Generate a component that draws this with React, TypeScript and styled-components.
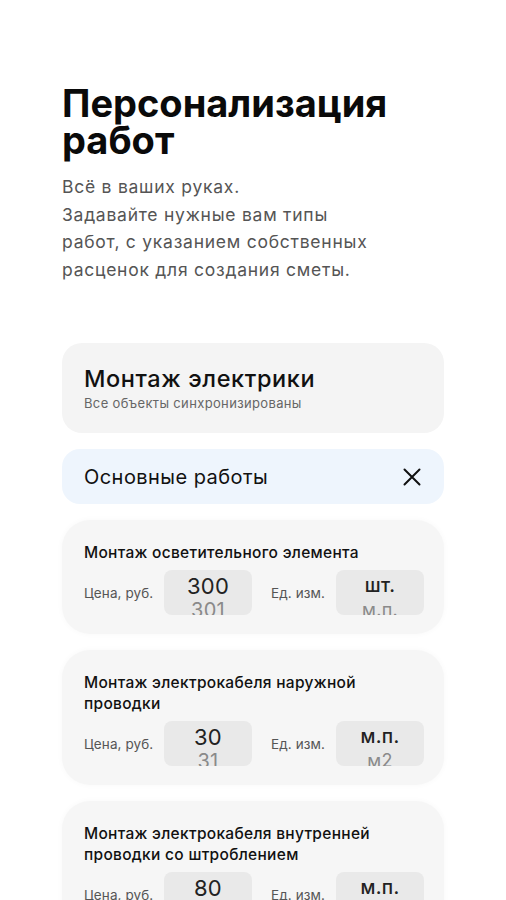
import React from "react";
import styled, { createGlobalStyle } from "styled-components";

const Global = createGlobalStyle`
  html, body { margin: 0; padding: 0; background: #ffffff; }
  body { font-family: Inter, "Noto Sans", "Liberation Sans", sans-serif; color: #111; }
  * { box-sizing: border-box; }
`;

const Page = styled.div`
  width: 506px;
  height: 900px;
  overflow: hidden;
  padding: 85px 62px 0;
  display: flex;
  flex-direction: column;
`;

const Title = styled.h1`
  margin: 0;
  font-size: 38px;
  line-height: 37px;
  font-weight: 700;
  letter-spacing: 0;
  color: #0a0a0a;
`;

const Lead = styled.p`
  margin: 14px 0 0;
  font-size: 17.5px;
  line-height: 27.5px;
  font-weight: 400;
  letter-spacing: 0.75px;
  color: #555;
`;

const List = styled.div`
  margin-top: 60px;
  display: flex;
  flex-direction: column;
  gap: 16px;
`;

const ProjectCard = styled.div`
  height: 90px;
  border-radius: 20px;
  background: #f4f4f4;
  padding: 0 22px;
  display: flex;
  flex-direction: column;
  justify-content: center;
  gap: 3px;
`;

const ProjectName = styled.div`
  font-size: 23.5px;
  line-height: 27px;
  font-weight: 500;
  letter-spacing: 0.6px;
  color: #111;
`;

const ProjectNote = styled.div`
  font-size: 13px;
  line-height: 16px;
  letter-spacing: 0.35px;
  color: #666;
`;

const CategoryBar = styled.div`
  height: 55px;
  border-radius: 18px;
  background: #eef5fd;
  padding: 0 23px 0 22px;
  display: flex;
  align-items: center;
  justify-content: space-between;
`;

const CategoryName = styled.span`
  font-size: 20px;
  font-weight: 400;
  letter-spacing: 0.45px;
  color: #111;
`;

const CloseButton = styled.button`
  border: 0;
  background: none;
  padding: 0;
  display: flex;
  cursor: pointer;
`;

const ItemCard = styled.div`
  border-radius: 28px;
  background: #f6f6f6;
  box-shadow: 0 0 6px rgba(0, 0, 0, 0.03);
  padding: 22px 20px 19px 22px;
  display: flex;
  flex-direction: column;
  gap: 7px;
`;

const ItemName = styled.div`
  font-size: 15.5px;
  line-height: 21px;
  font-weight: 500;
  color: #111;
  letter-spacing: 0.3px;
`;

const Row = styled.div`
  display: grid;
  grid-template-columns: 80px 88px 1fr 88px;
  align-items: center;
`;

const FieldLabel = styled.span<{ $indent?: boolean }>`
  font-size: 13.5px;
  color: #555;
  padding-left: ${(p) => (p.$indent ? "19px" : "0")};
  letter-spacing: 0.1px;
`;

const Wheel = styled.div`
  height: 45px;
  border-radius: 8px;
  background: #e9e9e9;
  overflow: hidden;
  display: flex;
  justify-content: center;
`;

const WheelColumn = styled.div`
  margin-top: -20px;
  display: flex;
  flex-direction: column;
  align-items: center;
`;

const WheelItem = styled.div<{ $active?: boolean; $unit?: boolean }>`
  height: 24px;
  line-height: 24px;
  font-size: ${(p) => (p.$active ? (p.$unit ? "19px" : "22px") : p.$unit ? "18px" : "20px")};
  font-weight: ${(p) => (p.$active && p.$unit ? 500 : 400)};
  color: ${(p) => (p.$active ? "#222" : "#8a8a8a")};
  letter-spacing: 0.3px;
`;

type Item = {
  name: string;
  price: number;
  units: [string, string, string];
};

const items: Item[] = [
  { name: "Монтаж осветительного элемента", price: 300, units: ["компл.", "шт.", "м.п."] },
  { name: "Монтаж электрокабеля наружной проводки", price: 30, units: ["шт.", "м.п.", "м2"] },
  { name: "Монтаж электрокабеля внутренней проводки со штроблением", price: 80, units: ["шт.", "м.п.", "м2"] },
];

function Picker({ values, unit }: { values: [string, string, string]; unit?: boolean }) {
  return (
    <Wheel>
      <WheelColumn>
        <WheelItem $unit={unit}>{values[0]}</WheelItem>
        <WheelItem $active $unit={unit}>{values[1]}</WheelItem>
        <WheelItem $unit={unit}>{values[2]}</WheelItem>
      </WheelColumn>
    </Wheel>
  );
}

const CloseIcon = () => (
  <svg width="18" height="18" viewBox="0 0 18 18" fill="none">
    <path d="M1.5 1.5L16.5 16.5M16.5 1.5L1.5 16.5" stroke="#111" strokeWidth="2" strokeLinecap="round" />
  </svg>
);

export default function App() {
  return (
    <>
      <Global />
      <Page>
        <Title>
          Персонализация
          <br />
          работ
        </Title>
        <Lead>
          Всё в ваших руках.
          <br />
          Задавайте нужные вам типы
          <br />
          работ, с указанием собственных
          <br />
          расценок для создания сметы.
        </Lead>
        <List>
          <ProjectCard>
            <ProjectName>Монтаж электрики</ProjectName>
            <ProjectNote>Все объекты синхронизированы</ProjectNote>
          </ProjectCard>
          <CategoryBar>
            <CategoryName>Основные работы</CategoryName>
            <CloseButton aria-label="close">
              <CloseIcon />
            </CloseButton>
          </CategoryBar>
          {items.map((it, i) => (
            <ItemCard key={i}>
              <ItemName>{it.name}</ItemName>
              <Row>
                <FieldLabel>Цена, руб.</FieldLabel>
                <Picker values={[String(it.price - 1), String(it.price), String(it.price + 1)]} />
                <FieldLabel $indent>Ед. изм.</FieldLabel>
                <Picker values={it.units} unit />
              </Row>
            </ItemCard>
          ))}
        </List>
      </Page>
    </>
  );
}
